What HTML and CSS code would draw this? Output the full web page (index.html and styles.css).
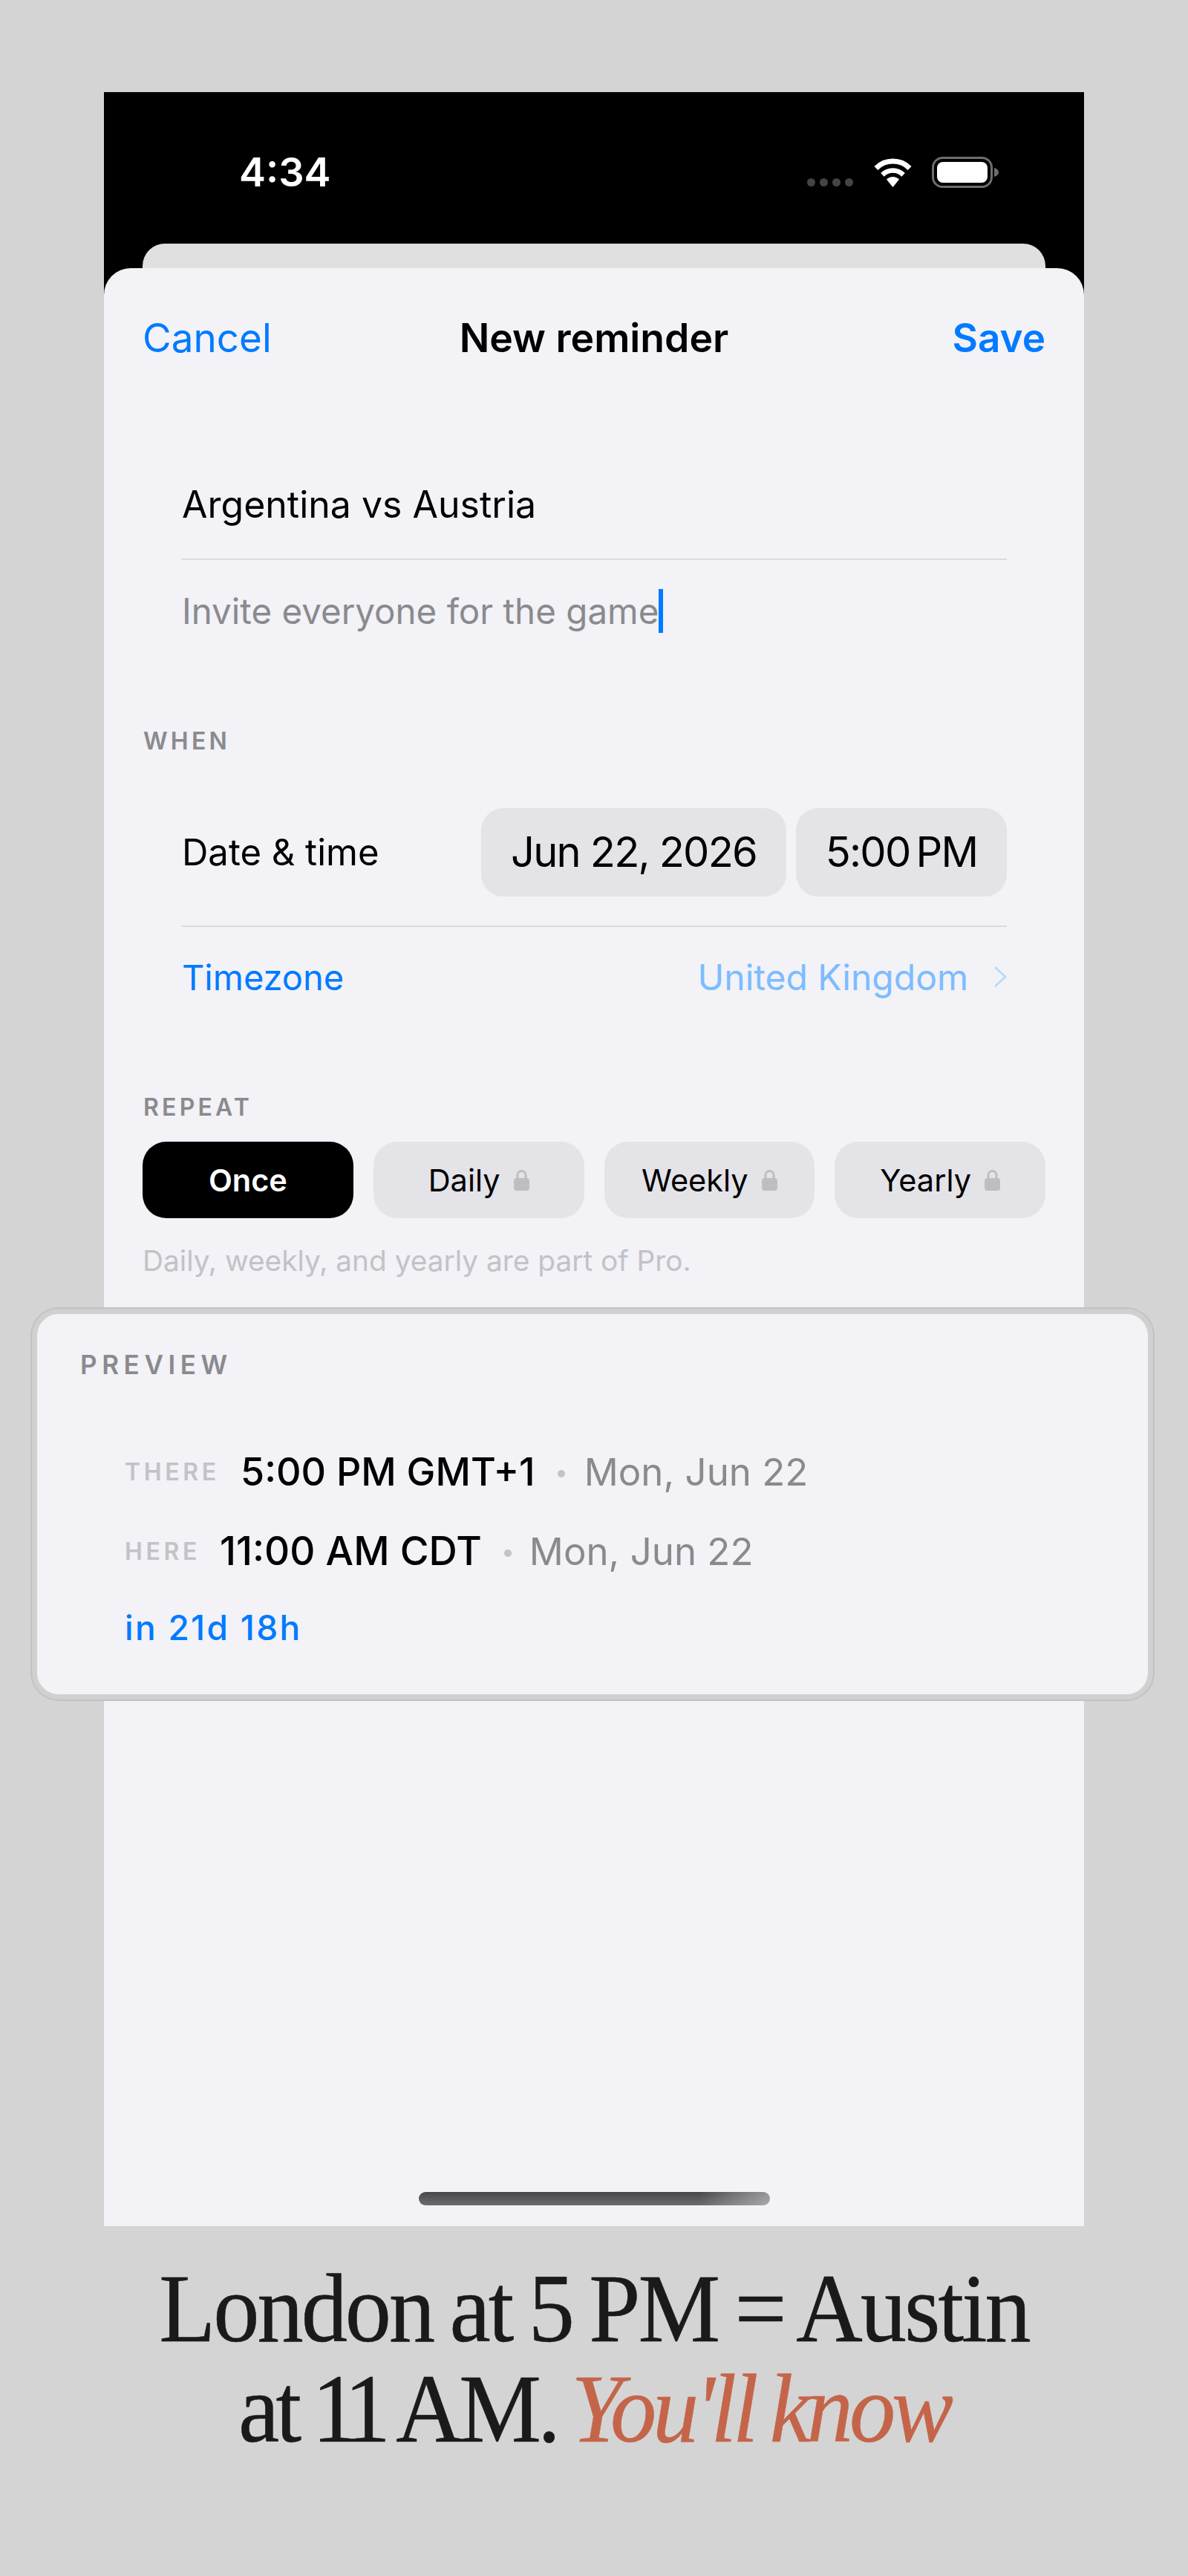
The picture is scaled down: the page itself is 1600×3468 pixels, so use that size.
FILE: index.html
```html
<!DOCTYPE html>
<html>
<head>
  <title>New reminder</title>
  <link rel="stylesheet" href="styles.css">
</head>
<body>
  <div class="phone">
    <div class="status-bar">
      <span class="clock">4:34</span>
      <div class="status-icons">
        <span class="signal"><i></i><i></i><i></i><i></i></span>
        <svg class="wifi" viewBox="0 0 55 41">
          <path d="M4.9 15.4A32 32 0 0 1 50.1 15.4" fill="none" stroke="#fff" stroke-width="7"/>
          <path d="M13.4 24.4A20 20 0 0 1 41.6 24.4" fill="none" stroke="#fff" stroke-width="6.5"/>
          <path d="M27.5 41L19 30.5A12 12 0 0 1 36 30.5Z" fill="#fff"/>
        </svg>
        <svg class="battery" viewBox="0 0 90 42">
          <rect x="1.5" y="1.5" width="79" height="39" rx="13" fill="none" stroke="#6e6e6e" stroke-width="3"/>
          <rect x="7" y="7" width="68" height="28" rx="8" fill="#fff"/>
          <path d="M84 15C88 16 90 18.500 90 21C90 23.500 88 26 84 27Z" fill="#6e6e6e"/>
        </svg>
      </div>
    </div>

    <div class="back-sheet"></div>

    <div class="sheet">
      <div class="nav">
        <span class="nav-cancel">Cancel</span>
        <span class="nav-title">New reminder</span>
        <span class="nav-save">Save</span>
      </div>

      <div class="fields">
        <div class="field-title">Argentina vs Austria</div>
        <div class="field-note"><span>Invite everyone for the game</span><b class="caret"></b></div>
      </div>

      <div class="section-label when-label">WHEN</div>

      <div class="date-row">
        <span class="date-label">Date &amp; time</span>
        <div class="date-pills">
          <span class="pill pill-date">Jun 22, 2026</span>
          <span class="pill pill-time">5:00<em>PM</em></span>
        </div>
      </div>
      <div class="zone-row">
        <span class="zone-label">Timezone</span>
        <span class="zone-value">United Kingdom</span>
        <svg class="chevron" viewBox="0 0 18 30"><path d="M2 2L16 15L2 28" fill="none" stroke="#b5d8fc" stroke-width="2.500"/></svg>
      </div>

      <div class="section-label repeat-label">REPEAT</div>
      <div class="repeat-options">
        <div class="option option-active">Once</div>
        <div class="option">Daily
          <svg class="lock" viewBox="0 0 21 29"><path d="M5 13V8A5.500 5.500 0 0 1 16 8V13" fill="none" stroke="#bdbdc2" stroke-width="3"/><rect y="12" width="21" height="17" rx="4" fill="#bdbdc2"/></svg>
        </div>
        <div class="option">Weekly
          <svg class="lock" viewBox="0 0 21 29"><path d="M5 13V8A5.500 5.500 0 0 1 16 8V13" fill="none" stroke="#bdbdc2" stroke-width="3"/><rect y="12" width="21" height="17" rx="4" fill="#bdbdc2"/></svg>
        </div>
        <div class="option">Yearly
          <svg class="lock" viewBox="0 0 21 29"><path d="M5 13V8A5.500 5.500 0 0 1 16 8V13" fill="none" stroke="#bdbdc2" stroke-width="3"/><rect y="12" width="21" height="17" rx="4" fill="#bdbdc2"/></svg>
        </div>
      </div>
      <div class="repeat-note">Daily, weekly, and yearly are part of Pro.</div>

      <div class="preview">
        <div class="preview-label">PREVIEW</div>
        <div class="preview-row preview-there">
          <span class="tag">THERE</span>
          <span class="time">5:00 PM GMT+1</span>
          <i class="dot"></i>
          <span class="day">Mon, Jun 22</span>
        </div>
        <div class="preview-row preview-here">
          <span class="tag">HERE</span>
          <span class="time">11:00 AM CDT</span>
          <i class="dot"></i>
          <span class="day">Mon, Jun 22</span>
        </div>
        <div class="countdown">in 21d 18h</div>
      </div>

      <div class="home-bar"></div>
    </div>
  </div>

  <h1 class="headline">London at 5 PM = Austin<br><span class="headline-start">at <span class="first-one">1</span>1 AM. </span><em>You'll know</em></h1>
</body>
</html>
```

FILE: styles.css
```css
body {
  margin: 0;
  height: 3468px;
  overflow: hidden;
  background-color: #d4d4d4;
  font-family: "Inter", "Liberation Sans", sans-serif;
  color: #000;
}

.phone {
  width: 1320px;
  height: 2873px;
  margin: 124px auto 0;
  background-color: #000;
}

/* status bar */
.status-bar {
  display: flex;
  justify-content: space-between;
  height: 204px;
  padding: 78px 115px 0 182px;
  box-sizing: border-box;
}
.clock {
  color: #fff;
  font-size: 54px;
  font-weight: 600;
  line-height: 60px;
}
.status-icons {
  display: flex;
  align-items: flex-start;
  margin-top: 9px;
}
.signal {
  display: flex;
  gap: 6px;
  margin: 29px 26px 0 0;
}
.signal i {
  width: 11px;
  height: 11px;
  border-radius: 50%;
  background-color: #444;
}
.wifi {
  width: 55px;
  height: 41px;
  margin-right: 25px;
}
.battery {
  width: 90px;
  height: 42px;
}

.back-sheet {
  height: 33px;
  margin: 0 52px;
  background-color: #e0e0e0;
  border-radius: 30px 30px 0 0;
}

.sheet {
  height: 2636px;
  background-color: #f2f2f7;
  border-radius: 36px 36px 0 0;
}

/* nav */
.nav {
  display: grid;
  grid-template-columns: 1fr auto 1fr;
  height: 188px;
  padding: 64px 52px 0;
  box-sizing: border-box;
  font-size: 53px;
  line-height: 60px;
}
.nav-cancel {
  color: #007aff;
}
.nav-title {
  font-size: 53.5px;
  font-weight: 600;
}
.nav-save {
  color: #007aff;
  font-weight: 600;
  text-align: right;
}

/* title + note */
.fields {
  margin: 58px 104px 0 105px;
  font-size: 50px;
}
.field-title {
  height: 145px;
  line-height: 145px;
  border-bottom: 2px solid #d9d9de;
}
.field-note {
  display: flex;
  align-items: center;
  height: 136px;
  color: #8a8a8e;
  font-size: 47.5px;
}
.caret {
  width: 6px;
  height: 59px;
  background-color: #007aff;
}

.section-label {
  margin-left: 53px;
  color: #8a8a8e;
  font-size: 32px;
  font-weight: 600;
  line-height: 40px;
  letter-spacing: 4.2px;
}
.when-label {
  margin-top: 88px;
  margin-bottom: 70px;
}
.repeat-label {
  margin-top: 89px;
  margin-bottom: 26px;
}

/* date rows */
.date-row {
  display: flex;
  justify-content: space-between;
  align-items: center;
  margin: 0 104px 0 105px;
  padding-bottom: 39px;
  border-bottom: 2px solid #d9d9de;
}
.date-label {
  font-size: 49px;
}
.date-pills {
  display: flex;
  gap: 13px;
}
.pill {
  display: block;
  height: 119px;
  border-radius: 30px;
  background-color: #e3e3e8;
  font-size: 56px;
  letter-spacing: -1.8px;
  line-height: 119px;
  text-align: center;
}
.pill-date {
  width: 411px;
}
.pill-time {
  width: 284px;
}
.pill-time em {
  margin-left: 8px;
  font-style: normal;
}
.zone-row {
  display: flex;
  align-items: center;
  height: 134px;
  margin: 0 104px 0 105px;
  font-size: 48px;
}
.zone-label {
  flex: 1;
  color: #007aff;
  font-size: 47px;
}
.zone-value {
  color: #7cbcff;
}
.chevron {
  width: 18px;
  height: 30px;
  margin-left: 34px;
}

/* repeat */
.repeat-options {
  display: grid;
  grid-template-columns: repeat(4, 1fr);
  gap: 27px;
  margin: 0 52px;
}
.option {
  display: flex;
  align-items: center;
  justify-content: center;
  gap: 18px;
  height: 103px;
  border-radius: 32px;
  background-color: #e3e3e8;
  font-size: 41.5px;
}
.option-active {
  background-color: #000;
  color: #fff;
  font-weight: 600;
}
.lock {
  width: 21px;
  height: 29px;
}
.repeat-note {
  margin: 32px 52px 0;
  color: #c2c2c7;
  font-size: 38.8px;
  line-height: 50px;
}

/* preview card */
.preview {
  height: 526px;
  margin: 40px -93px 0 -97px;
  padding: 48px 0 0 58px;
  box-sizing: border-box;
  background-color: #f2f2f7;
  border: 7px solid #d0d0d0;
  border-radius: 36px;
  box-shadow: 0 0 0 2px #c2c2c2;
}
.preview-label {
  color: #8a8a8e;
  font-size: 35px;
  font-weight: 600;
  line-height: 40px;
  letter-spacing: 6.6px;
}
.preview-row {
  display: flex;
  align-items: center;
  height: 70px;
  margin-left: 60px;
}
.preview-there {
  margin-top: 89px;
}
.preview-here {
  margin-top: 37px;
}
.tag {
  width: 156px;
  color: #c2c2c7;
  font-size: 32px;
  font-weight: 600;
  letter-spacing: 4.6px;
}
.preview-here .tag {
  width: 128px;
}
.time {
  font-size: 52px;
  font-weight: 500;
}
.preview-here .time {
  font-size: 53px;
}
.dot {
  width: 10px;
  height: 10px;
  margin: 6px 26px 0 30px;
  border-radius: 50%;
  background-color: #c2c2c7;
}
.preview-here .dot {
  margin-right: 24px;
}
.day {
  color: #8a8a8e;
  font-size: 51px;
}
.countdown {
  margin: 38px 0 0 60px;
  color: #007aff;
  font-size: 46px;
  font-weight: 500;
  letter-spacing: 2.3px;
  line-height: 60px;
}

.home-bar {
  width: 473px;
  height: 18px;
  margin: 663px auto 0;
  border-radius: 9px;
  background: linear-gradient(to right, transparent 80%, rgba(242, 242, 247, 0.45)), linear-gradient(#48484c, #6c6c70);
}

/* caption under the phone */
.headline {
  margin: 43px 0 0;
  color: #1a1a1a;
  font-family: "Liberation Serif", serif;
  font-size: 131px;
  font-weight: 400;
  line-height: 135px;
  letter-spacing: -3.2px;
  word-spacing: -6px;
  text-align: center;
  transform: scaleX(0.95);
  -webkit-text-stroke: 0.5px;
}
.headline-start {
  letter-spacing: -5px;
  word-spacing: -8px;
}
.first-one {
  letter-spacing: -0.15em;
}
.headline em {
  color: #c4654a;
  letter-spacing: -5.4px;
}
```
